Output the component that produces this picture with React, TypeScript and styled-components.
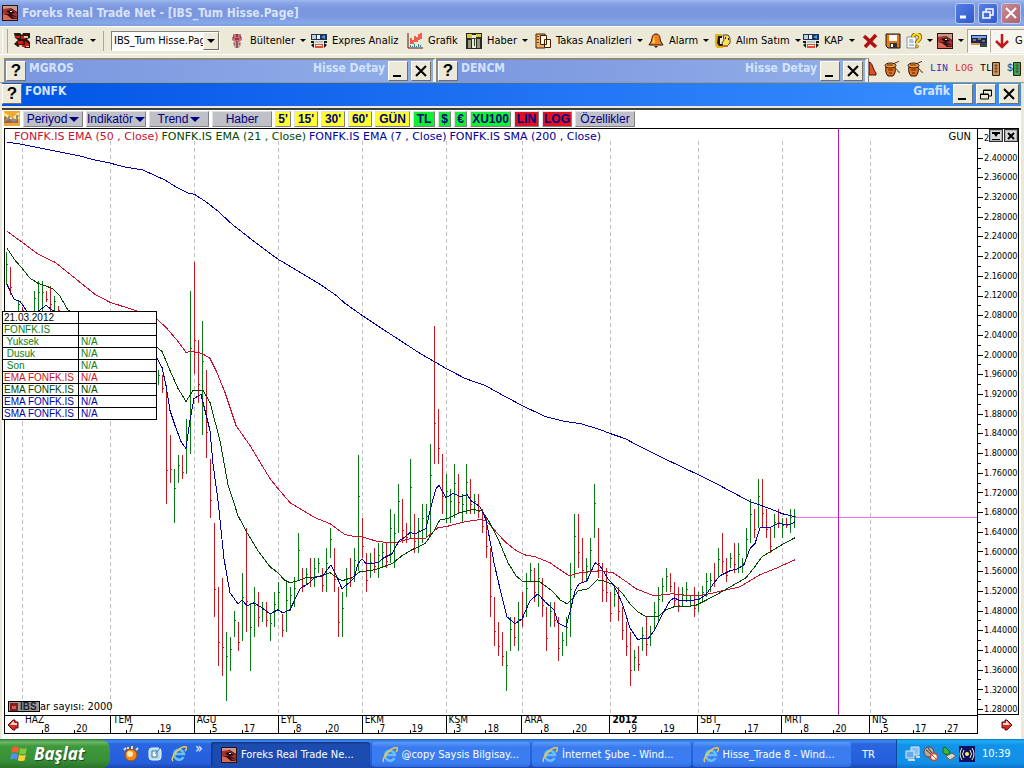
import React from 'react';
import styled, { createGlobalStyle, css } from 'styled-components';

const UI = "'DejaVu Sans Condensed', 'Noto Sans', sans-serif";
const ARIAL = "'Liberation Sans', Arial, sans-serif";

const GlobalStyle = createGlobalStyle`
  * { box-sizing: border-box; }
  body { margin: 0; background: #ece9d8; font-family: ${UI}; font-size: 11px; color: #000; }
  button, select { font: inherit; color: inherit; padding: 0; margin: 0; border: 0; background: none; }
  svg { display: block; flex: none; }
`;

const Desktop = styled.div`
  display: flex;
  flex-direction: column;
  min-height: 100vh;
  overflow: hidden;
`;

/* ---------- application title bar ---------- */

const TitleBar = styled.header`
  display: flex;
  align-items: center;
  height: 26px;
  padding: 0 3px 0 2px;
  gap: 4px;
  background: linear-gradient(#9db9ee 0, #8aa6e6 3px, #7b97e0 8px, #7b96de 16px, #86a9ea 23px, #7b9be0 26px);
`;

const AppTitle = styled.h1`
  flex: 1;
  margin: 0;
  font: bold 12px/16px ${UI};
  color: #d8e4f8;
  white-space: nowrap;
`;

const CaptionButton = styled.button<{ $close?: boolean }>`
  display: grid;
  place-items: center;
  width: 20px;
  height: 21px;
  margin-left: -1px;
  border: 1px solid #b9c9f0;
  border-radius: 3px;
  background: ${p => (p.$close ? 'linear-gradient(135deg, #c88a94, #b0606e)' : 'linear-gradient(135deg, #5580e4, #3058cc)')};
`;

/* ---------- main toolbar ---------- */

const ToolBar = styled.nav`
  display: flex;
  align-items: center;
  height: 28px;
  padding-left: 2px;
  background: #ece9d8;
  border-top: 1px solid #fff;
  overflow: hidden;
`;

const Grip = styled.span`
  flex: none;
  width: 6px;
  height: 24px;
  margin-right: 6px;
  border-left: 1px solid #fff;
  border-right: 1px solid #aca899;
`;

const Tool = styled.button<{ $w: number; $pressed?: boolean }>`
  flex: none;
  display: flex;
  align-items: center;
  gap: 5px;
  width: ${p => p.$w}px;
  height: 24px;
  white-space: nowrap;
  ${p => p.$pressed && css`
    padding-left: 3px;
    background: #f7f5ee;
    border: 1px solid #aca899;
    border-right-color: #fff;
    border-bottom-color: #fff;
  `}
`;

const Caret = styled.span`
  margin-left: auto;
  margin-right: 7px;
  border: 3px solid transparent;
  border-top-color: #000;
  border-bottom: 0;
`;

const Separator = styled.span`
  flex: none;
  width: 1px;
  height: 20px;
  margin-right: 7px;
  background: #aca899;
`;

const Combo = styled.label`
  flex: none;
  display: flex;
  width: 109px;
  height: 20px;
  margin-right: 9px;
  border: 1px solid #808080;
  border-right-color: #fff;
  border-bottom-color: #fff;
  background: #fff;
`;

const ComboSelect = styled.select`
  appearance: none;
  flex: 1;
  min-width: 0;
  padding-left: 2px;
  overflow: hidden;
  text-overflow: clip;
`;

const ComboArrow = styled.span`
  display: grid;
  place-items: center;
  width: 16px;
  background: #ece9d8;
  border: 1px solid #fff;
  border-right-color: #716f64;
  border-bottom-color: #716f64;
  &::after {
    content: '';
    border: 4px solid transparent;
    border-top-color: #000;
    border-bottom: 0;
  }
`;

/* ---------- child windows ---------- */

const ChildRow = styled.div`
  display: flex;
  height: 28px;
  padding: 3px 0 0 4px;
  background: #ece9d8;
  border-top: 1px solid #fff;
`;

const ChildWindow = styled.section`
  flex: 430 1 0;
  display: flex;
  border: 2px solid #8a8a80;
  border-right: 3px solid #f4f2e8;
  border-bottom: 0;
`;

const ChildBar = styled.header<{ $active?: boolean }>`
  flex: 1;
  display: flex;
  align-items: flex-start;
  gap: 3px;
  background: ${p => (p.$active
    ? 'linear-gradient(90deg, #0055e5, #1a6cf0 40%, #3a90ff)'
    : 'linear-gradient(90deg, #7a96df, #92aee8)')};
`;

const ChildTitle = styled.h2<{ $grow?: boolean }>`
  flex: ${p => (p.$grow ? 1 : 'none')};
  margin: 0;
  font: bold 12px/16px ${UI};
  color: #d5e3fa;
`;

const Square = styled.button`
  flex: none;
  display: grid;
  place-items: center;
  width: 20px;
  height: 20px;
  margin-top: 1px;
  background: #ece9d8;
  border: 1px solid #fff;
  border-right-color: #716f64;
  border-bottom-color: #716f64;
  font: bold 17px/18px ${ARIAL};
`;

const SquareGroup = styled.div`
  display: flex;
  gap: 3px;
  margin-right: 2px;
`;

const SideTools = styled.div`
  flex: 156 1 0;
  display: flex;
  align-items: center;
  gap: 7px;
  padding-bottom: 3px;
  overflow: hidden;
  border-left: 1px solid #808080;
`;

const SideTool = styled.button<{ $color?: string }>`
  display: flex;
  align-items: center;
  font: 10px/14px 'Liberation Mono', monospace;
  color: ${p => p.$color || '#000'};
`;

const ChartWindow = styled.main`
  flex: 1;
  display: flex;
  flex-direction: column;
  padding: 0 3px 0 2px;
  border-top: 1px solid #a09870;
  background: #ece9d8;
`;

const ChartTitle = styled(ChildBar)`
  flex: none;
  height: 23px;
`;

const ChartBody = styled.div`
  flex: 1;
  display: flex;
  flex-direction: column;
  margin-top: 2px;
  border-top: 2px solid #404040;
  background: #fff;
`;

/* ---------- chart toolbar ---------- */

const ChartTools = styled.nav`
  display: flex;
  gap: 3px;
  height: 18px;
  padding: 1px 0 1px 2px;
`;

const ChartTool = styled.button<{ $w: number; $bg?: string; $bold?: boolean }>`
  flex: none;
  display: flex;
  align-items: center;
  justify-content: center;
  gap: 2px;
  width: ${p => p.$w}px;
  height: 16px;
  background: ${p => p.$bg || '#c0c0c8'};
  border: 1px solid #e0e0e0;
  border-right-color: #808080;
  border-bottom-color: #808080;
  font: ${p => (p.$bold ? 'bold ' : '')}12px/14px ${ARIAL};
  color: #000080;
`;

const Drop = styled.span`
  border: 5px solid transparent;
  border-top-color: #000080;
  border-bottom: 0;
`;

/* ---------- chart ---------- */

const ChartGrid = styled.div`
  position: relative;
  flex: 1;
  display: grid;
  grid-template-columns: minmax(0, 1fr) 41px;
  grid-template-rows: minmax(560px, 1fr) 19px;
  margin: 0 2px 5px 2px;
`;

const Plot = styled.div`
  position: relative;
  border: 1px solid #000;
  border-bottom: 0;
`;

const PlotSvg = styled.svg`
  position: absolute;
  inset: 0;
  width: 100%;
  height: 100%;
`;

const Legend = styled.div`
  position: relative;
  display: flex;
  gap: 3px;
  padding: 1px 6px 0 9px;
  font: 11px/13px 'DejaVu Sans', sans-serif;
  white-space: pre;
`;

const LegendItem = styled.span<{ $color: string }>`
  color: ${p => p.$color};
`;

const Period = styled.span`
  margin-left: auto;
  font-size: 10px;
`;

const BarCount = styled.div`
  position: absolute;
  left: 3px;
  bottom: 2px;
  display: flex;
  align-items: center;
  font: 11px/13px ${UI};
`;

const Badge = styled.span`
  display: flex;
  align-items: center;
  gap: 2px;
  width: 32px;
  height: 11px;
  padding-left: 1px;
  border: 1px solid #000;
  background: #9a9a9a;
  font: bold 10px/9px ${ARIAL};
  color: #202028;
`;

const PriceAxis = styled.div`
  position: relative;
  display: flex;
  border: 1px solid #000;
  border-left: 0;
`;

const PriceTicks = styled.svg`
  width: 6px;
  height: 100%;
`;

const PriceLabels = styled.ol`
  flex: 1;
  display: flex;
  flex-direction: column;
  margin: -1px 0 -5px 0;
  padding: 0;
  list-style: none;
  font: 9px/18px ${UI};
`;

const PriceLabel = styled.li`
  flex: 1 1 0;
  display: flex;
  align-items: center;
  min-height: 0;
`;

const PaneButtons = styled.div`
  position: absolute;
  top: 0;
  right: 0;
  display: flex;
  gap: 1px;
  background: #fff;
`;

const PaneButton = styled.button`
  display: grid;
  place-items: center;
  width: 14px;
  height: 13px;
  background: #d8d8d8;
  border: 1px solid #303030;
  box-shadow: inset 0 0 0 1px #b0b0b0;
`;

const TimeAxis = styled.div`
  display: grid;
  grid-template-columns: 17fr 88fr 84fr 84fr 84fr 84fr 76fr 88fr 88fr 84fr 88fr 108fr;
  border: 1px solid #000;
  font: 10px/9px ${UI};
`;

const Month = styled.div<{ $first?: boolean; $bold?: boolean }>`
  border-left: 1px solid ${p => (p.$first ? 'transparent' : '#000')};
  strong {
    display: block;
    height: 8px;
    padding-left: 2px;
    line-height: 7px;
    font-weight: ${p => (p.$bold ? 'bold' : 'normal')};
  }
`;

const Days = styled.div<{ $cols: string }>`
  display: grid;
  grid-template-columns: ${p => p.$cols};
`;

const Day = styled.span`
  display: flex;
  align-items: flex-end;
  gap: 1px;
  height: 9px;
  &::before {
    content: '';
    width: 1px;
    height: 3px;
    background: #000;
  }
`;

const ScrollButton = styled.button<{ $forward?: boolean }>`
  display: grid;
  place-items: center;
  padding-left: ${p => (p.$forward ? 16 : 0)}px;
`;

const DataTable = styled.table`
  position: absolute;
  left: -2px;
  top: 183px;
  width: 155px;
  table-layout: fixed;
  border-collapse: collapse;
  background: #fff;
  font: 10px/11px ${ARIAL};
`;

const DataRow = styled.tr<{ $color: string }>`
  color: ${p => p.$color};
  th, td {
    height: 12px;
    padding: 0 0 0 2px;
    border: 1px solid #000;
    font-weight: normal;
    text-align: left;
    white-space: pre;
  }
  th { width: 76px; padding-left: 1px; }
`;

/* ---------- task bar ---------- */

const TaskBar = styled.footer`
  display: flex;
  height: 30px;
  background: linear-gradient(#1f4fb8 0, #3f8cf3 2px, #2a66e0 5px, #245edb 24px, #1941a5 30px);
  color: #fff;
`;

const Start = styled.button`
  display: flex;
  align-items: center;
  gap: 6px;
  width: 110px;
  padding-left: 10px;
  border-radius: 0 10px 10px 0;
  background: linear-gradient(#2f7a2f 0, #6cb86a 3px, #3f9a3c 7px, #388e36 22px, #2a6f2a 30px);
  font: italic bold 17px/20px 'Noto Sans', sans-serif;
  text-shadow: 1px 1px 1px #1c4a1c;
`;

const QuickLaunch = styled.div`
  display: flex;
  align-items: center;
  gap: 8px;
  width: 101px;
  padding-left: 13px;
`;

const QuickButton = styled.button`
  display: flex;
`;

const More = styled.button`
  align-self: flex-start;
  font: 14px/18px ${UI};
`;

const Tasks = styled.div`
  flex: 1;
  display: flex;
  gap: 2px;
  padding: 3px 0 2px;
`;

const Task = styled.button<{ $active?: boolean }>`
  flex: 1 1 0;
  min-width: 0;
  display: flex;
  align-items: center;
  gap: 4px;
  padding-left: 10px;
  border-radius: 3px;
  white-space: nowrap;
  background: ${p => (p.$active ? '#1c4cb0' : 'linear-gradient(#5a9bfa, #3a7cf0 5px, #3b7ef2 20px, #2f6be0)')};
  box-shadow: ${p => (p.$active ? 'inset 1px 1px 2px #10307c' : 'none')};
`;

const Language = styled.button`
  width: 45px;
  padding-right: 10px;
`;

const Tray = styled.div`
  display: flex;
  align-items: center;
  gap: 2px;
  width: 128px;
  padding-left: 8px;
  border-left: 1px solid #0e4a9c;
  background: linear-gradient(#0f70c8 0, #1cb0f5 2px, #1292e8 6px, #1290e8 24px, #0d6cc0 30px);
`;

const Clock = styled.time`
  margin-left: 5px;
  font: 11px/14px ${UI};
`;

/* ---------- icons ---------- */

const Eye = ({ size = 16 }: { size?: number }) => (
  <svg width={size} height={size} viewBox="0 0 16 16">
    <path d="M0 0h16v16H0z" fill="#301010" />
    <path d="M1 1h14v6L9 3 1 5z" fill="#c89888" />
    <path d="M1 4l7-1 7 5v4l-6-3-8 0z" fill="#a83030" />
    <path d="M1 9l4 1 5 4h5v1H1z" fill="#d86858" />
    <path d="M10 11l5 1v2l-4-1z" fill="#803028" />
    <path d="M4 6l5-1 4 3-5 1z" fill="#180808" />
    <path d="M8 6h2v1H8z" fill="#fff" />
  </svg>
);

const shapes: Record<string, React.ReactNode> = {
  real: (
    <>
      <path d="M0 0h6l2 2 1-2h7v5l-3 1 3 3v6h-5l-3-3-4 2-4-3 4-4-3-2z" fill="#281810" />
      <path d="M1 3h5v2H1zM7 3h4v3H7zM4 8h5v3H4zM11 8l4 3v2h-4zM8 12h3v2H8z" fill="#e01818" />
      <path d="M10 3h4v2h-4zM5 12h3v1H5zM12 13h3v1h-3z" fill="#e8c890" />
    </>
  ),
  flower: (
    <>
      <path d="M4 1h3v2h2V1h3v3h1v3l-3 2H6L3 7V4h1z" fill="#c07078" />
      <path d="M7 1h2v3H7zM6 5h4v2H6zM4 3h1v2H4zM11 3h1v2h-1z" fill="#983840" />
      <path d="M4 9h8v3l-2 3H6l-2-3z" fill="#c0a8a8" />
      <path d="M7 8h2v7H7z" fill="#a05058" />
      <path d="M5 10h1v2H5zM10 10h1v2h-1z" fill="#806868" />
    </>
  ),
  news: (
    <>
      <path d="M0 1h16v6H0z" fill="#203050" />
      <path d="M1 2h4v4H1z" fill="#c0d0e0" />
      <path d="M6 2h3v4H6z" fill="#e8f0f8" />
      <path d="M14 2v4l-4-2z" fill="#48a0e8" />
      <path d="M0 8h3v2H0zM13 8h3v2h-3z" fill="#101820" />
      <path d="M4 8h8v2H4z" fill="#b0c8d8" />
      <path d="M0 12l3-2v5zM16 12l-3-2v5z" fill="#181818" />
      <path d="M4 11h8v4H4z" fill="#e05038" />
      <path d="M5 12h6v1H5z" fill="#fff" />
    </>
  ),
  chart: (
    <>
      <path d="M1 0v15h15" fill="none" stroke="#601010" />
      <path d="M4 5v6M6 7v4M8 3v6M10 4v5M12 1v6M14 0v6" stroke="#e82818" strokeWidth="1.4" />
      <path d="M3 12h1v2H3zM5 13h1v1H5zM7 11h1v3H7zM9 13h1v1H9zM11 11h1v3h-1zM13 12h1v2h-1z" fill="#208898" />
    </>
  ),
  paper: (
    <>
      <path d="M0 0h16v16H0z" fill="#282820" />
      <path d="M1 1h5v4H1zM10 1h5v3h-5z" fill="#d8c840" />
      <path d="M6 2h4v13H6z" fill="#e8e8d8" />
      <path d="M2 7h3v8H2zM11 6h3v9h-3z" fill="#909880" />
      <path d="M4 5h8v1H4zM8 6h1v7H8z" fill="#404030" />
    </>
  ),
  pages: (
    <>
      <path d="M1 1h9v14H1z" fill="#f0b060" stroke="#402000" />
      <path d="M5.500 2.500h6v9h-6zM9.500 6.500h6v8h-6z" fill="#fff8e0" stroke="#402000" />
      <path d="M2 3h2v1H2zM2 6h2v1H2zM2 9h2v1H2z" fill="#804010" />
    </>
  ),
  bell: (
    <>
      <path d="M8 1c4 0 4 4 4.500 7L15 12H1l2.500-4C4 5 4 1 8 1z" fill="#f08020" stroke="#301000" />
      <path d="M6 3c-1 2-1 5-2 7h3z" fill="#ffd060" />
      <path d="M6 13h4l-2 2z" fill="#401800" />
    </>
  ),
  trade: (
    <>
      <path d="M0 1h7v4H4v6h4v4H2L0 12z" fill="#e8b010" />
      <path d="M3 3h4v2H5v6h3v2H4L2 10z" fill="#201808" />
      <path d="M8 2h5l2 3v5l-3 3H8l-1-3 2-3z" fill="#f8e060" stroke="#604010" />
      <path d="M10 4h1v2h-1zM13 5h1v2h-1z" fill="#201000" />
      <path d="M8 12h5v2H8z" fill="#d86020" />
    </>
  ),
  cross: <path d="M2 3l12 11M14 2L3 14" stroke="#b01010" strokeWidth="3.500" />,
  save: (
    <>
      <path d="M1 1h14v14H3l-2-2z" fill="#e87810" stroke="#181818" />
      <path d="M4 2h8v6H4z" fill="#f8f8f8" />
      <path d="M5 10h7v5H5z" fill="#303030" />
      <path d="M6 11h2v3H6z" fill="#fff" />
    </>
  ),
  help: (
    <>
      <path d="M1 4h9v11H1z" fill="#fff" stroke="#8090a8" />
      <path d="M3 7h4M3 9h5M3 12h5" stroke="#7088b8" />
      <path d="M7 4c0-4 8-4 7 1 0 2-3 2-3 5" fill="none" stroke="#705000" strokeWidth="4" />
      <path d="M7 4c0-4 8-4 7 1 0 2-3 2-3 5" fill="none" stroke="#f8d820" strokeWidth="2.500" />
      <circle cx="11" cy="13.500" r="1.500" fill="#e8b810" stroke="#705000" strokeWidth=".5" />
    </>
  ),
  screen: (
    <>
      <path d="M0 2h16v8H0z" fill="#182860" />
      <path d="M1 3h14v2H1z" fill="#80a8e8" />
      <path d="M2 7h3M7 6h3M11 8h3" stroke="#f0c060" />
      <path d="M0 10h9v2H0z" fill="#e89838" />
      <path d="M9 10h7v4H9z" fill="#404040" />
    </>
  ),
  down: <path d="M8 1v12M2 8l6 6 6-6" fill="none" stroke="#c01818" strokeWidth="2.500" />,
  pot: (
    <>
      <path d="M2 6c-1 3 0 7 2 9h5c2-2 3-6 2-9z" fill="#e07020" stroke="#301000" />
      <ellipse cx="6.500" cy="4.500" rx="5.500" ry="2.500" fill="#f0a040" stroke="#301000" />
      <path d="M3 4h6M4 9h5M5 12h3" stroke="#602000" />
      <path d="M12 8c3 1 1 4 4 3M10 3c1-2 3-1 5-3" fill="none" stroke="#502000" />
    </>
  ),
  wave: (
    <>
      <path d="M0 0h16v15H0z" fill="#f0a830" />
      <path d="M0 3l4 2 4 4 7-7M0 10l5-3 5 3 5-4" fill="none" stroke="#fff0a0" strokeWidth="2" />
      <path d="M1 6v6M3 7v5M5 5v7M7 8v4M9 7v5M11 8v4M13 4v8" stroke="#302878" />
    </>
  ),
  ie: (
    <>
      <path d="M12.500 11A5 5 0 1 1 13 8H4" fill="none" stroke="#67c0f8" strokeWidth="2.500" />
      <path d="M2 15C-2 12 10-1 15 1c1 1 0 3-1 4" fill="none" stroke="#f0c848" strokeWidth="1.500" />
    </>
  ),
  orange: (
    <>
      <circle cx="8" cy="9" r="6" fill="#f08818" stroke="#a84808" />
      <circle cx="7" cy="8" r="3" fill="#ffe8b0" />
      <path d="M1 4l2-2M5 3V1M9 3V0M13 4l2-2" stroke="#f8d8a8" strokeWidth="2" />
    </>
  ),
  desktop: (
    <>
      <rect x="2" y="2" width="12" height="12" rx="3" fill="#b8dcf0" stroke="#e8f8ff" />
      <path d="M5 5h5v6H5zM8 8l5-6" fill="#fff" stroke="#3878a8" />
    </>
  ),
  flag: (
    <>
      <path d="M2 2c2-1 4-1 6 0L7 7C5 6 3 6 1 7z" fill="#f06030" />
      <path d="M9 2.500c2 1 4 1 6 0L14 7.500c-2 1-4 1-6 0z" fill="#80c840" />
      <path d="M1 8c2-1 4-1 6 0l-1 5c-2-1-4-1-6 0z" fill="#5090f0" />
      <path d="M8 8.500c2 1 4 1 6 0l-1 5c-2 1-4 1-6 0z" fill="#f8d038" />
    </>
  ),
  network: (
    <>
      <path d="M6 1h8v8H6z" fill="#88c0f4" stroke="#d8ecff" />
      <path d="M1 5h8v7H1z" fill="#68a8e8" stroke="#d8ecff" />
      <path d="M3 14h7M11 11h4" stroke="#d0d8e0" strokeWidth="2" />
    </>
  ),
  mute: (
    <>
      <circle cx="6" cy="6" r="5" fill="#b8a8a0" stroke="#584840" />
      <path d="M3 4l5 4M5 2l4 5" stroke="#483830" />
      <circle cx="11" cy="11" r="3.500" fill="#fff" stroke="#e04020" strokeWidth="1.500" />
      <path d="M9 9l4 4" stroke="#e04020" />
    </>
  ),
  eject: (
    <>
      <path d="M2 7V2l2-1 5 5-2 3z" fill="#38b838" stroke="#106810" />
      <path d="M5 10l6-3 4 3-6 4z" fill="#d0d8d0" stroke="#505850" />
      <path d="M5 10v2l4 3 6-4v-1l-6 4z" fill="#788078" />
    </>
  ),
  radio: (
    <>
      <path d="M0 0h16v16H0z" fill="#101060" />
      <circle cx="8" cy="8" r="2" fill="#f8f060" />
      <path d="M5 4q-3 4 0 8M11 4q3 4 0 8M3 2q-4 6 0 12M13 2q4 6 0 12" fill="none" stroke="#f0f0c0" />
    </>
  ),
};

const Icon = ({ name, size = 16 }: { name: string; size?: number }) =>
  name === 'eye' ? <Eye size={size} /> : (
    <svg width={size} height={size} viewBox="0 0 16 16" aria-hidden="true">{shapes[name]}</svg>
  );

const MinGlyph = () => <svg width="16" height="16"><path d="M3 13h8" stroke="#000" strokeWidth="2" /></svg>;
const CloseGlyph = () => <svg width="16" height="16"><path d="M3 3l10 10M13 3L3 13" stroke="#000" strokeWidth="2" /></svg>;
const RestoreGlyph = () => (
  <svg width="16" height="16">
    <path d="M5.500 8V4h8v6H11M5 4.500h9M2.500 8h8v5h-8zM2 8.500h9" fill="none" stroke="#000" />
  </svg>
);
const ArrowGlyph = ({ left }: { left?: boolean }) => (
  <svg width="12" height="12" viewBox="0 0 12 12">
    <g transform={left ? 'matrix(-1 0 0 1 12 0)' : undefined}>
      <path d="M1 3h3V1h2l5 5-5 5H4V9H1z" fill="#e02820" stroke="#501010" />
      <path d="M2 4h3V2h1l3 4H2z" fill="#f8d8d0" />
    </g>
  </svg>
);
const Token = ({ color }: { color: string }) => (
  <svg width="8" height="14"><path d="M.5.500h7v13h-7z" fill={color} stroke="#302010" /><path d="M3 3h2v1H3zM3 6h2v1H3zM3 9h2v1H3z" fill="none" stroke="#604830" /></svg>
);

/* ---------- data ---------- */

type ToolItem = { icon: string; label?: string; w: number; menu?: boolean; pressed?: boolean };

const tools: ToolItem[] = [
  { icon: 'flower', label: 'Bültenler', w: 82, menu: true },
  { icon: 'news', label: 'Expres Analiz', w: 96 },
  { icon: 'chart', label: 'Grafik', w: 59 },
  { icon: 'paper', label: 'Haber', w: 69, menu: true },
  { icon: 'pages', label: 'Takas Analizleri', w: 113, menu: true },
  { icon: 'bell', label: 'Alarm', w: 67, menu: true },
  { icon: 'trade', label: 'Alım Satım', w: 88, menu: true },
  { icon: 'news', label: 'KAP', w: 59, menu: true },
  { icon: 'cross', w: 23 },
  { icon: 'save', w: 21 },
  { icon: 'help', w: 31, menu: true },
  { icon: 'eye', w: 30, menu: true },
  { icon: 'screen', w: 23, pressed: true },
  { icon: 'down', label: 'G', w: 50, pressed: true },
];

const chartTools: { label: string; w: number; bg?: string; bold?: boolean; menu?: boolean }[] = [
  { label: 'Periyod', w: 60, menu: true },
  { label: 'Indikatör', w: 60, menu: true },
  { label: 'Trend', w: 60, menu: true },
  { label: 'Haber', w: 60 },
  { label: "5'", w: 16, bg: '#ffff30', bold: true },
  { label: "15'", w: 24, bg: '#ffff30', bold: true },
  { label: "30'", w: 24, bg: '#ffff30', bold: true },
  { label: "60'", w: 24, bg: '#ffff30', bold: true },
  { label: 'GÜN', w: 35, bg: '#ffff30', bold: true },
  { label: 'TL', w: 22, bg: '#10f030', bold: true },
  { label: '$', w: 13, bg: '#10f030', bold: true },
  { label: '€', w: 13, bg: '#10f030', bold: true },
  { label: 'XU100', w: 41, bg: '#10f030', bold: true },
  { label: 'LIN', w: 25, bg: '#e01020', bold: true },
  { label: 'LOG', w: 30, bg: '#e01020', bold: true },
  { label: 'Özellikler', w: 60 },
];

const legend = [
  { text: 'FONFK.IS EMA (50 , Close)', color: '#c8102c' },
  { text: 'FONFK.IS EMA (21 , Close)', color: '#004800' },
  { text: 'FONFK.IS EMA (7 , Close)', color: '#0000a0' },
  { text: 'FONFK.IS SMA (200 , Close)', color: '#000090' },
];

const rows = [
  { name: '21.03.2012', value: '', color: '#000' },
  { name: 'FONFK.IS', value: '', color: '#108010' },
  { name: ' Yuksek', value: 'N/A', color: '#108010' },
  { name: ' Dusuk', value: 'N/A', color: '#108010' },
  { name: ' Son', value: 'N/A', color: '#108010' },
  { name: 'EMA FONFK.IS', value: 'N/A', color: '#d01020' },
  { name: 'EMA FONFK.IS', value: 'N/A', color: '#004800' },
  { name: 'EMA FONFK.IS', value: 'N/A', color: '#0000b0' },
  { name: 'SMA FONFK.IS', value: 'N/A', color: '#0000b0' },
];

const months: { name: string; cols: string; days: string[] }[] = [
  { name: 'HAZ', cols: '19fr 32fr 36fr', days: ['8', '20'] },
  { name: 'TEM', cols: '15fr 32fr 36fr', days: ['7', '19'] },
  { name: 'AGU', cols: '15fr 32fr 36fr', days: ['5', '17'] },
  { name: 'EYL', cols: '15fr 32fr 36fr', days: ['8', '20'] },
  { name: 'EKM', cols: '15fr 32fr 36fr', days: ['7', '19'] },
  { name: 'KSM', cols: '7fr 32fr 36fr', days: ['3', '18'] },
  { name: 'ARA', cols: '19fr 32fr 36fr', days: ['8', '20'] },
  { name: '2012', cols: '19fr 32fr 36fr', days: ['9', '19'] },
  { name: 'SBT', cols: '15fr 32fr 36fr', days: ['7', '17'] },
  { name: 'MRT', cols: '19fr 32fr 36fr', days: ['8', '20'] },
  { name: 'NIS', cols: '11fr 32fr 32fr 32fr', days: ['5', '17', '27'] },
];

const monthX = [22, 110, 194, 278, 362, 446, 522, 610, 698, 782, 870];

/* one entry per session: x, high, low, and g (up) or r (down) */
const sessions = `6 252 285 g,10 267 295 r,18 300 311 g,22 307 311 r,34 291 311 g,38 281 311 g,42 281 311 g,46 291 302 r,50 286 311 r,54 296 311 g,58 306 311 r,
158 370 385 g,162 375 393 r,166 390 503 r,170 434 482 r,174 468 522 g,178 454 482 g,182 454 478 r,186 419 473 g,190 291 453 g,194 262 374 r,198 340 403 r,202 321 434 g,206 370 457 r,210 458 517 r,
214 522 616 r,218 586 665 r,222 577 675 r,226 631 700 g,230 636 670 g,234 610 636 g,238 621 650 r,242 572 640 g,246 527 631 r,250 602 670 g,254 586 636 g,258 591 626 r,262 601 621 g,266 601 626 r,270 612 640 g,
274 591 626 g,278 581 610 g,282 613 636 r,286 581 631 g,290 586 610 g,294 576 606 g,298 532 580 g,302 567 591 r,306 567 583 g,310 557 586 r,314 557 586 g,318 557 572 g,322 567 591 r,326 547 591 g,330 527 557 g,
334 547 591 r,338 586 636 r,342 591 636 g,346 567 596 g,350 557 586 r,354 547 581 g,358 454 570 g,362 517 557 r,366 552 591 r,370 552 577 g,374 547 572 r,378 542 577 g,382 542 567 g,386 542 567 r,390 508 562 g,
394 513 567 g,398 483 532 g,402 498 542 r,406 522 542 r,410 458 537 g,414 513 552 r,418 517 552 g,422 503 542 g,426 503 537 g,430 443 532 g,434 326 463 r,438 409 463 r,442 453 513 r,446 473 522 g,450 488 522 g,
454 463 517 g,458 473 513 r,462 493 522 g,466 463 513 g,470 478 513 r,474 493 513 g,478 493 517 r,482 508 532 r,486 517 557 r,490 547 616 r,494 596 645 r,498 621 655 r,502 631 665 r,506 650 690 g,510 616 650 g,
514 616 645 r,518 601 650 g,522 591 626 r,526 572 616 g,530 562 581 g,534 567 601 r,538 562 606 g,542 577 616 r,546 606 650 r,550 601 626 g,554 601 626 r,558 616 660 r,562 631 655 g,566 616 645 g,570 562 636 g,
574 513 577 g,578 513 567 r,582 537 582 r,586 557 581 g,590 537 572 g,594 483 537 g,598 527 577 r,602 562 601 r,606 567 601 r,610 591 621 r,614 586 606 g,618 586 620 r,622 606 639 r,626 621 655 r,630 631 685 r,
634 649 670 g,638 645 670 r,642 626 650 g,646 616 655 r,650 625 645 g,654 601 630 g,658 586 621 g,662 577 601 g,666 567 591 g,670 572 591 r,674 581 606 r,678 586 611 r,682 586 606 g,686 581 601 g,690 595 606 g,
694 586 616 r,698 591 611 g,702 585 601 g,706 572 596 g,710 572 591 g,714 562 586 r,718 547 577 g,722 532 572 r,726 557 581 r,730 552 567 g,734 542 572 r,738 542 572 g,742 557 572 g,746 527 557 g,750 498 542 g,
754 508 537 r,758 478 527 g,762 478 527 r,766 508 537 r,770 527 552 r,774 513 537 g,778 508 527 r,782 517 537 g,786 517 527 r,790 508 532 g,794 508 527 g`
  .split(',')
  .map(s => s.trim().split(' '))
  .map(([x, high, low, dir]) => ({ x: +x, high: +high, low: +low, up: dir === 'g' }));

const barPath = (up: boolean) =>
  sessions.filter(s => s.up === up)
    .map(s => {
      const close = Math.round(s.high + (s.low - s.high) * (up ? 0.35 : 0.7));
      return `M${s.x + 0.5} ${s.high}V${s.low}M${s.x + 1} ${close + 0.5}h1`;
    })
    .join('');

const sma200 = '7,142 20,144 40,148 60,152 80,156 95,160 110,163 125,167 143,170 165,180 178,188 188,193 194,194 205,201 218,211 232,224 255,242 278,259 300,272 320,284 336,295 345,303 362,315 380,327 400,340 420,353 434,361 446,368 465,378 485,385 505,396 522,405 545,416 565,421 580,423 600,429 610,433 625,438 640,446 660,456 698,474 720,485 750,501 770,508 782,513 795,516';
const ema50 = '7,231 22,242 38,254 55,262 75,278 95,294 110,302 135,310 157,319 166,327 178,341 186,352 192,351 202,353 210,358 216,370 225,392 236,425 250,445 270,478 278,488 290,502 300,508 315,517 330,523 345,534 355,536 362,536 378,541 395,542 410,538 425,538 438,527 446,526 465,521 480,519 486,520 495,530 505,541 515,549 524,554 535,556 550,562 560,569 569,575 580,572 600,570 613,572 625,580 636,588 654,595 672,593 690,595 705,594 718,591 740,586 750,580 760,574 775,568 795,559';
const ema21 = '7,248 15,260 22,268 30,278 38,283 52,288 60,296 68,310 100,325 157,347 162,351 170,370 178,388 186,401 193,390 203,390 210,402 220,440 228,484 238,515 247,532 258,550 270,566 278,572 284,579 290,582 298,580 306,577 318,576 330,572 342,580 352,577 360,571 375,569 392,563 402,555 412,549 425,543 434,530 440,519 448,518 460,512 472,509 482,510 488,519 498,538 508,562 516,575 523,581 540,581 553,591 560,599 567,603 574,596 578,590 588,588 597,579 603,580 614,584 622,592 630,603 638,611 646,616 658,616 666,609 674,606 695,605 705,600 720,592 746,577 754,567 762,556 772,550 782,544 795,537';
const ema7 = '7,284 14,299 20,301 27,311 38,311 46,305 54,311 100,340 157,358 162,367 166,385 170,410 175,425 181,441 186,448 190,420 194,398 201,394 205,410 210,430 213,463 218,500 224,558 230,592 238,603 242,599 247,605 254,602 262,607 270,613 278,609 283,612 290,609 300,588 308,583 314,577 323,575 331,564 336,574 342,588 349,582 354,577 358,563 362,558 366,563 378,562 384,557 392,553 399,540 404,537 410,532 416,533 426,528 431,506 436,488 439,485 446,497 453,493 461,496 467,494 471,500 480,506 486,519 490,540 494,562 500,588 507,616 515,623 522,618 530,600 538,593 545,601 554,609 558,622 566,626 571,607 575,590 579,583 587,580 595,562 600,565 608,578 614,585 622,602 630,627 638,639 642,637 648,638 654,630 662,614 670,600 674,597 680,600 698,599 706,594 714,582 720,575 730,570 738,568 744,564 750,548 755,543 760,527 770,527 778,523 790,524 795,521';

const prices = Array.from({ length: 30 }, (_, i) => (2.44 - i * 0.04).toFixed(5));

const priceTickPath = Array.from({ length: 59 }, (_, i) => {
  const y = Math.round(9 + i * 9.845) + 0.5;
  return `M0 ${y}h${i % 2 ? 3 : 5}`;
}).join('');

/* ---------- page ---------- */

const HisseDetay = ({ symbol }: { symbol: string }) => (
  <ChildWindow>
    <ChildBar>
      <Square aria-label="Yardım">?</Square>
      <ChildTitle $grow>{symbol}</ChildTitle>
      <ChildTitle>Hisse Detay</ChildTitle>
      <SquareGroup>
        <Square aria-label="Küçült"><MinGlyph /></Square>
        <Square aria-label="Kapat"><CloseGlyph /></Square>
      </SquareGroup>
    </ChildBar>
  </ChildWindow>
);

const Chart = () => (
  <ChartGrid>
    <Plot>
      <PlotSvg viewBox="5 129 972 585" preserveAspectRatio="none" fill="none" shapeRendering="crispEdges">
        {monthX.map(x => (
          <path key={x} d={`M${x + 0.5} 141V714`} stroke="#c0c0c0" strokeDasharray="4 3" />
        ))}
        <path d={barPath(true)} stroke="#0a7a14" />
        <path d={barPath(false)} stroke="#c81822" />
        <polyline points={sma200} stroke="#0000a0" />
        <polyline points={ema50} stroke="#c8102c" />
        <polyline points={ema21} stroke="#004800" />
        <polyline points={ema7} stroke="#0000a8" />
        <path d="M795 516.500H978" stroke="#ee70ee" />
        <path d="M838.500 129V714" stroke="#b818c0" />
      </PlotSvg>
      <Legend>
        {legend.map(l => <LegendItem key={l.text} $color={l.color}>{l.text}</LegendItem>)}
        <Period>GUN</Period>
      </Legend>
      <BarCount>
        <Badge><svg width="8" height="8"><path d="M0 0h8v8H0z" fill="#802020" /><path d="M2 3h4v3H2z" fill="#d06050" /></svg>IBS</Badge>
        ar sayısı: 2000
      </BarCount>
    </Plot>
    <PriceAxis>
      <PriceTicks viewBox="0 0 6 585" preserveAspectRatio="none" shapeRendering="crispEdges">
        <path d={priceTickPath} stroke="#000" />
      </PriceTicks>
      <PriceLabels>{prices.map(p => <PriceLabel key={p}>{p}</PriceLabel>)}</PriceLabels>
      <PaneButtons>
        <PaneButton aria-label="Daralt"><svg width="10" height="10"><path d="M1 1h8v2H7L5 6 3 3H1zM1 8h8v1H1z" /></svg></PaneButton>
        <PaneButton aria-label="Paneli kapat"><svg width="10" height="10"><path d="M2 2l6 6M8 2L2 8" stroke="#000" strokeWidth="2" /></svg></PaneButton>
      </PaneButtons>
    </PriceAxis>
    <TimeAxis>
      <ScrollButton aria-label="Geri"><ArrowGlyph left /></ScrollButton>
      {months.map((m, i) => (
        <Month key={m.name} $first={i === 0} $bold={m.name === '2012'}>
          <strong>{m.name}</strong>
          <Days $cols={m.cols}>
            <span />
            {m.days.map(d => <Day key={d}>{d}</Day>)}
          </Days>
        </Month>
      ))}
    </TimeAxis>
    <ScrollButton $forward aria-label="İleri"><ArrowGlyph /></ScrollButton>
    <DataTable>
      <tbody>
        {rows.map((r, i) => (
          <DataRow key={i} $color={r.color}><th scope="row">{r.name}</th><td>{r.value}</td></DataRow>
        ))}
      </tbody>
    </DataTable>
  </ChartGrid>
);

export default function App() {
  return (
    <Desktop>
      <GlobalStyle />
      <TitleBar>
        <Eye />
        <AppTitle>Foreks Real Trade Net - [IBS_Tum Hisse.Page]</AppTitle>
        <CaptionButton aria-label="Simge durumuna küçült"><svg width="14" height="14"><path d="M2 11h6" stroke="#fff" strokeWidth="3" /></svg></CaptionButton>
        <CaptionButton aria-label="Önceki boyut"><svg width="14" height="14"><path d="M5 6V3h7v6H9M2 6h7v6H2z" fill="none" stroke="#fff" strokeWidth="1.500" /></svg></CaptionButton>
        <CaptionButton $close aria-label="Kapat"><svg width="14" height="14"><path d="M2 2l10 10M12 2L2 12" stroke="#fff" strokeWidth="2" /></svg></CaptionButton>
      </TitleBar>

      <ToolBar>
        <Grip />
        <Tool $w={89}><Icon name="real" />RealTrade<Caret /></Tool>
        <Separator />
        <Combo>
          <ComboSelect aria-label="Sayfa"><option>IBS_Tum Hisse.Page</option></ComboSelect>
          <ComboArrow />
        </Combo>
        {tools.map((t, i) => (
          <Tool key={i} $w={t.w} $pressed={t.pressed} aria-label={t.label || t.icon}>
            <Icon name={t.icon} />{t.label}{t.menu && <Caret />}
          </Tool>
        ))}
      </ToolBar>

      <ChildRow>
        <HisseDetay symbol="MGROS" />
        <HisseDetay symbol="DENCM" />
        <SideTools>
          <SideTool aria-label="Alarm"><svg width="8" height="16"><path d="M0 1c4 1 3 6 7 11v2H0z" fill="#e05020" stroke="#401000" /></svg></SideTool>
          <SideTool aria-label="Al"><Icon name="pot" /></SideTool>
          <SideTool aria-label="Sat"><Icon name="pot" /></SideTool>
          <SideTool $color="#2030c0">LIN</SideTool>
          <SideTool $color="#d83030">LOG</SideTool>
          <SideTool>TL<Token color="#d09058" /></SideTool>
          <SideTool $color="#103880">$<Token color="#30a850" /></SideTool>
        </SideTools>
      </ChildRow>

      <ChartWindow>
        <ChartTitle $active>
          <Square aria-label="Yardım">?</Square>
          <ChildTitle $grow>FONFK</ChildTitle>
          <ChildTitle>Grafik</ChildTitle>
          <SquareGroup>
            <Square aria-label="Küçült"><MinGlyph /></Square>
            <Square aria-label="Önceki boyut"><RestoreGlyph /></Square>
            <Square aria-label="Kapat"><CloseGlyph /></Square>
          </SquareGroup>
        </ChartTitle>
        <ChartBody>
          <ChartTools>
            <Icon name="wave" />
            {chartTools.map(t => (
              <ChartTool key={t.label} $w={t.w} $bg={t.bg} $bold={t.bold}>{t.label}{t.menu && <Drop />}</ChartTool>
            ))}
          </ChartTools>
          <Chart />
        </ChartBody>
      </ChartWindow>

      <TaskBar>
        <Start><Icon name="flag" size={18} />Başlat</Start>
        <QuickLaunch>
          <QuickButton aria-label="Medya"><Icon name="orange" /></QuickButton>
          <QuickButton aria-label="Masaüstünü göster"><Icon name="desktop" /></QuickButton>
          <QuickButton aria-label="Internet Explorer"><Icon name="ie" /></QuickButton>
          <More>»</More>
        </QuickLaunch>
        <Tasks>
          <Task $active><Eye />Foreks Real Trade Ne...</Task>
          <Task><Icon name="ie" />@copy Saysis Bilgisay...</Task>
          <Task><Icon name="ie" />İnternet Şube - Wind...</Task>
          <Task><Icon name="ie" />Hisse_Trade 8 - Wind...</Task>
        </Tasks>
        <Language>TR</Language>
        <Tray>
          <Icon name="network" />
          <Icon name="mute" />
          <Icon name="eject" />
          <Icon name="radio" />
          <Clock>10:39</Clock>
        </Tray>
      </TaskBar>
    </Desktop>
  );
}
